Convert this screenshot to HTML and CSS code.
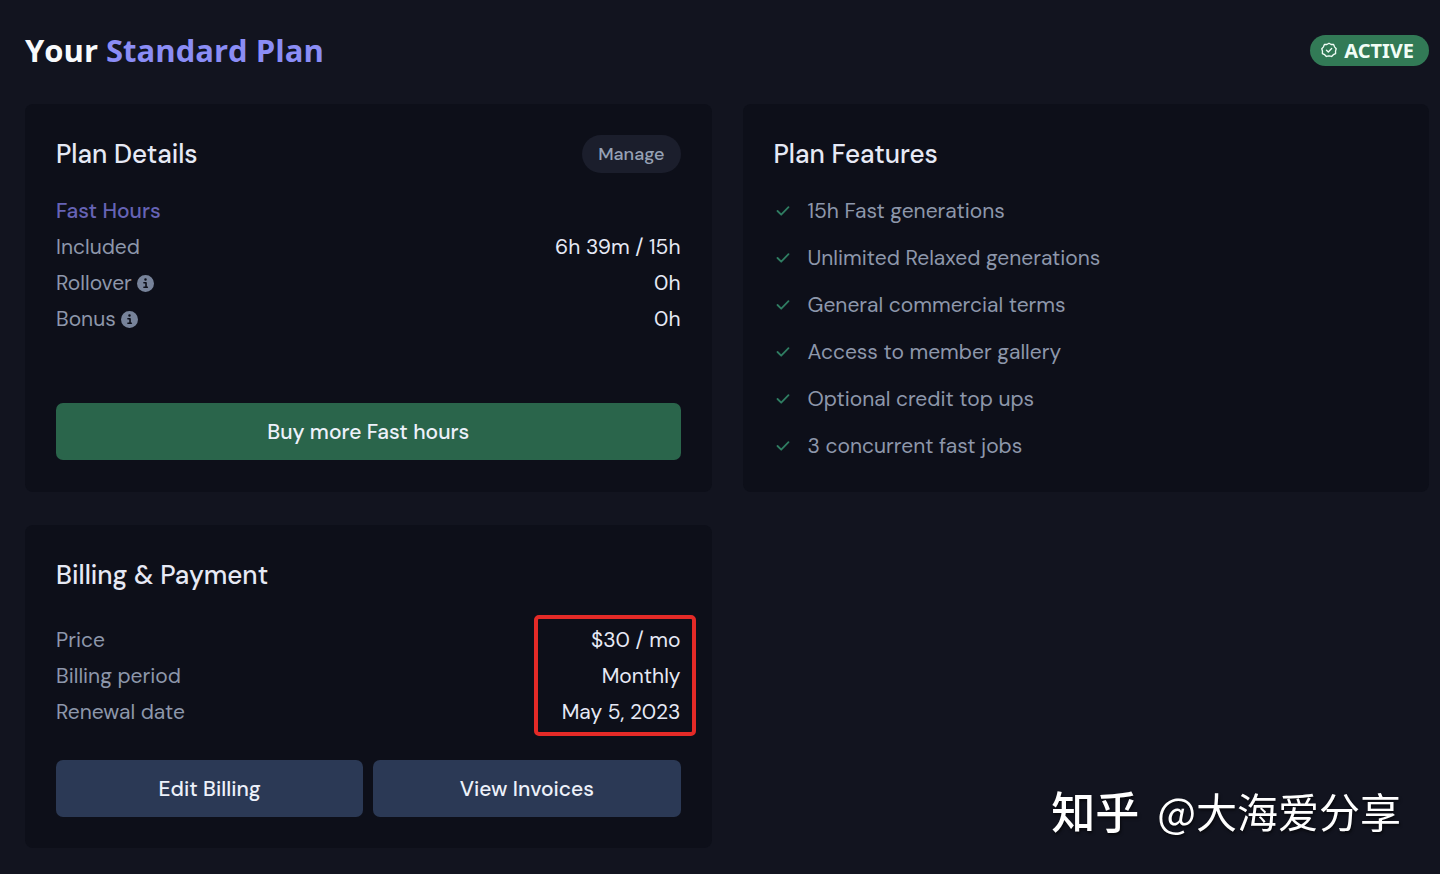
FILE: index.html
```html
<!DOCTYPE html>
<html lang="en">
<head>
    <meta charset="UTF-8">
    <title>Manage Subscription</title>
    <meta name="viewport" content="width=device-width, initial-scale=1.0">
    <link rel="stylesheet" href="styles.css">
</head>
<body>
    <svg class="sprite" aria-hidden="true">
        <symbol id="check" viewBox="0 0 16 16">
            <path d="M2.5 8l3.7 3.7 7.3-7.6" fill="none" stroke="currentColor" stroke-width="1.8" stroke-linecap="round" stroke-linejoin="round"/>
        </symbol>
        <symbol id="info" viewBox="0 0 512 512">
            <path fill="currentColor" fill-rule="evenodd" d="M256 0a256 256 0 1 0 0 512a256 256 0 1 0 0-512zM256 96a38 38 0 1 1 0 76a38 38 0 1 1 0-76zM208 208h64c13 0 24 11 24 24v112h16c13 0 24 11 24 24s-11 24-24 24h-104c-13 0-24-11-24-24s11-24 24-24h40v-88h-40c-13 0-24-11-24-24s11-24 24-24z"/>
        </symbol>
    </svg>

    <header class="page-header">
        <h1>Your <span>Standard Plan</span></h1>
        <div class="status">
            <svg class="status-icon" viewBox="0 0 24 24" fill="none" stroke="currentColor" stroke-width="2" stroke-linecap="round" stroke-linejoin="round">
                <path d="M12 1.8l3.2 1.9 3.7.1 1.4 3.5 2.5 2.8-1 3.6.1 3.7-3.4 1.6-2.6 2.7-3.9-.8-3.9.8-2.6-2.7-3.4-1.6.1-3.7-1-3.6 2.5-2.8 1.4-3.5 3.7-.1z"/>
                <path d="M8.2 12.3l2.8 2.8 5-5.3"/>
            </svg>
            ACTIVE
        </div>
    </header>

    <main class="cards">
        <section class="card">
            <div class="card-header">
                <h2>Plan Details</h2>
                <button type="button" class="manage">Manage</button>
            </div>
            <h3>Fast Hours</h3>
            <dl class="details">
                <div><dt>Included</dt><dd>6h 39m / 15h</dd></div>
                <div><dt>Rollover <svg class="info"><use href="#info"/></svg></dt><dd>0h</dd></div>
                <div><dt>Bonus <svg class="info"><use href="#info"/></svg></dt><dd>0h</dd></div>
            </dl>
            <div class="actions">
                <button type="button" class="btn btn-green">Buy more Fast hours</button>
            </div>
        </section>

        <section class="card">
            <div class="card-header">
                <h2>Plan Features</h2>
            </div>
            <ul class="features">
                <li><svg class="check"><use href="#check"/></svg>15h Fast generations</li>
                <li><svg class="check"><use href="#check"/></svg>Unlimited Relaxed generations</li>
                <li><svg class="check"><use href="#check"/></svg>General commercial terms</li>
                <li><svg class="check"><use href="#check"/></svg>Access to member gallery</li>
                <li><svg class="check"><use href="#check"/></svg>Optional credit top ups</li>
                <li><svg class="check"><use href="#check"/></svg>3 concurrent fast jobs</li>
            </ul>
        </section>

        <section class="card billing">
            <div class="card-header">
                <h2>Billing &amp; Payment</h2>
            </div>
            <dl class="details">
                <div><dt>Price</dt><dd>$30 / mo</dd></div>
                <div><dt>Billing period</dt><dd>Monthly</dd></div>
                <div><dt>Renewal date</dt><dd>May 5, 2023</dd></div>
            </dl>
            <div class="actions">
                <button type="button" class="btn">Edit Billing</button>
                <button type="button" class="btn">View Invoices</button>
            </div>
        </section>
    </main>

    <div class="watermark" lang="zh-CN"><strong>知乎</strong><span>@大海爱分享</span></div>
</body>
</html>
```

FILE: styles.css
```css
*, *::after {
    box-sizing: border-box;
}
body {
    margin: 0;
    padding: 26px 11px 26px 25px;
    background-color: #12141f;
    color: #e6e9f5;
    font-family: "DM Sans", Inter, sans-serif;
    font-size: 21px;
    line-height: 36px;
}
h1, h2, h3, dl, dd, ul {
    margin: 0;
    padding: 0;
}
.sprite {
    display: none;
}

/* header */
.page-header {
    display: flex;
    align-items: center;
    justify-content: space-between;
    height: 48px;
    margin-bottom: 30px;
    font-family: "Noto Sans", sans-serif;
}
h1 {
    font-family: "Open Sans", sans-serif;
    font-size: 31px;
    font-weight: 700;
    color: #f8fafc;
}
h1 span {
    color: #8b8df5;
}
.status {
    display: flex;
    align-items: center;
    gap: 7px;
    padding: 0 15px 0 11px;
    border-radius: 16px;
    background-color: #327a56;
    color: #f1fdf6;
    font-size: 20px;
    font-weight: 700;
    line-height: 31px;
}
.status-icon {
    width: 16px;
    height: 16px;
}

/* cards */
.cards {
    display: grid;
    grid-template-columns: 1fr 1fr;
    gap: 33px 31px;
}
.card {
    padding: 31px;
    border-radius: 8px;
    background-color: #0d0f19;
}
.card-header {
    display: flex;
    align-items: center;
    justify-content: space-between;
    height: 38px;
}
h2 {
    font-size: 26px;
    font-weight: 500;
}
h3 {
    margin-top: 20px;
    font-size: 21px;
    font-weight: 500;
    color: #6663b5;
}
button {
    border: none;
    font-family: inherit;
    font-weight: 500;
    cursor: pointer;
}
.manage {
    padding: 0 16px;
    border-radius: 19px;
    background-color: #1b1e2c;
    color: #96a1b5;
    font-size: 18px;
    line-height: 38px;
}
.details {
    position: relative;
}
.details div {
    display: flex;
    justify-content: space-between;
}
.details dt {
    color: #8d97ab;
}
.info {
    width: 17px;
    height: 17px;
    vertical-align: -2px;
    color: #77839a;
}
.actions {
    display: flex;
    gap: 10px;
    margin-top: 66px;
}
.btn {
    flex: 1;
    height: 57px;
    border-radius: 7px;
    background-color: #2b3955;
    color: #edf1fa;
    font-size: 21px;
}
.btn-green {
    background-color: #2a654b;
}
.features {
    display: flex;
    flex-direction: column;
    gap: 17px;
    margin-top: 23px;
    list-style: none;
    line-height: 30px;
    color: #8d97ab;
}
.features li {
    display: flex;
    align-items: center;
    gap: 17px;
}
.check {
    width: 16px;
    height: 16px;
    margin-left: 1px;
    color: #2f7d62;
}

/* billing */
.billing .details {
    margin-top: 28px;
}
.billing .details::after {
    content: "";
    position: absolute;
    top: -7px;
    right: -15px;
    bottom: -6px;
    width: 162px;
    border: 4px solid #e42a27;
    border-radius: 5px;
}
.billing .actions {
    margin-top: 30px;
}

/* watermark */
.watermark {
    position: fixed;
    right: 39px;
    bottom: 34px;
    display: flex;
    gap: 18px;
    color: #fff;
    font-family: "Noto Sans CJK SC", sans-serif;
    font-size: 41px;
    line-height: 60px;
    text-shadow: 1px 2px 3px rgba(0, 0, 0, 0.6);
}
.watermark strong {
    font-size: 44px;
    font-weight: 500;
}
```
